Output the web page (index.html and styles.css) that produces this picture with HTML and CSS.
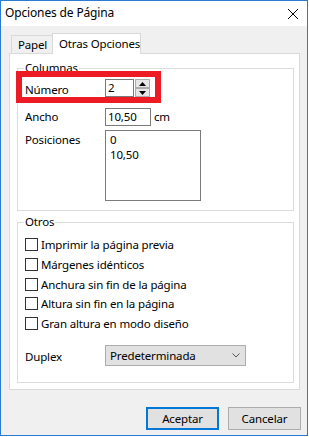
FILE: index.html
```html
<!DOCTYPE html>
<html lang="es">
<head>
<meta charset="utf-8">
<title>Opciones de Página</title>
<link rel="stylesheet" href="styles.css">
</head>
<body>
<div class="window">
  <div class="titlebar">
    <span class="title">Opciones de Página</span>
    <svg class="close" width="10" height="10" viewBox="0 0 10 10" aria-label="Cerrar">
      <path d="M0 0 L10 10 M10 0 L0 10" stroke="#000" stroke-width="1" fill="none"/>
    </svg>
  </div>
  <div class="content">
    <div class="tabs">
      <div class="tab">Papel</div>
      <div class="tab active">Otras Opciones</div>
    </div>
    <div class="panel">
      <fieldset class="group columnas">
        <legend>Columnas</legend>
        <div class="field numero">
          <span class="label">Número</span>
          <div class="spin">
            <div class="input spin-input">2</div>
            <div class="spin-btns">
              <div class="spin-btn"><svg width="7" height="4" viewBox="0 0 7 4"><path d="M0 4 L3.5 0 L7 4 Z" fill="#000"/></svg></div>
              <div class="spin-btn"><svg width="7" height="4" viewBox="0 0 7 4"><path d="M0 0 L3.5 4 L7 0 Z" fill="#000"/></svg></div>
            </div>
          </div>
          <div class="highlight"></div>
        </div>
        <div class="field ancho">
          <span class="label">Ancho</span>
          <div class="input ancho-input">10,50</div>
          <span class="unit">cm</span>
        </div>
        <div class="field posiciones">
          <span class="label">Posiciones</span>
          <div class="listbox">
            <div class="item">0</div>
            <div class="item">10,50</div>
          </div>
        </div>
      </fieldset>
      <fieldset class="group otros">
        <legend>Otros</legend>
        <div class="checks">
          <label class="check"><span class="box"></span><span>Imprimir la página previa</span></label>
          <label class="check"><span class="box"></span><span>Márgenes idénticos</span></label>
          <label class="check"><span class="box"></span><span>Anchura sin fin de la página</span></label>
          <label class="check"><span class="box"></span><span>Altura sin fin en la página</span></label>
          <label class="check"><span class="box"></span><span>Gran altura en modo diseño</span></label>
        </div>
        <div class="field duplex">
          <span class="label">Duplex</span>
          <div class="combo">
            <span>Predeterminada</span>
            <svg width="8" height="5" viewBox="0 0 8 5"><path d="M0.5 0.5 L4 4 L7.5 0.5" stroke="#555" stroke-width="1" fill="none"/></svg>
          </div>
        </div>
      </fieldset>
    </div>
    <div class="buttons">
      <div class="button default">Aceptar</div>
      <div class="button">Cancelar</div>
    </div>
  </div>
</div>
</body>
</html>
```

FILE: styles.css
```css
* {
  box-sizing: border-box;
}

body {
  margin: 0;
  background: #ffffff;
  font-family: "Noto Sans", "Open Sans", sans-serif;
  font-size: 11.5px;
  letter-spacing: -0.15px;
  color: #000000;
}

.window {
  width: 308px;
  height: 436px;
  border: 1px solid #2b7bd3;
  background: #f0f0f0;
  display: flex;
  flex-direction: column;
}

.titlebar {
  height: 25px;
  flex: none;
  background: #ffffff;
  display: flex;
  align-items: center;
  justify-content: space-between;
  padding: 0 9px 0 4px;
}

.title {
  font-size: 12px;
  line-height: 16px;
  margin-top: -2px;
}

.close {
  display: block;
}

.content {
  flex: 1;
  display: flex;
  flex-direction: column;
  padding: 7px 7px 0 8px;
}

.tabs {
  display: flex;
  align-items: flex-end;
  height: 20px;
  padding-left: 2px;
  position: relative;
  z-index: 1;
}

.tab {
  height: 18px;
  width: 42px;
  padding: 0 0 0 6px;
  border: 1px solid #d9d9d9;
  border-bottom: none;
  background: #f0f0f0;
  line-height: 17px;
  white-space: nowrap;
}

.tab.active {
  height: 21px;
  width: 89px;
  margin-left: -1px;
  background: #ffffff;
  margin-bottom: -1px;
  padding-top: 1px;
  line-height: 18px;
}

.panel {
  width: 291px;
  height: 337px;
  border: 1px solid #d9d9d9;
  background: #ffffff;
  padding: 6px 5px 0 7px;
  display: flex;
  flex-direction: column;
}

.group {
  margin: 0;
  border: 1px solid #dcdcdc;
  padding: 3px 7px 9px 7px;
  min-width: 0;
}

.group legend {
  padding: 0 1px;
  margin-left: -1px;
  line-height: 16px;
}

.field {
  display: flex;
  align-items: flex-start;
  position: relative;
}

.label {
  width: 80px;
  flex: none;
  line-height: 18px;
  padding-top: 2px;
}

.input {
  border: 1px solid #7a7a7a;
  background: #ffffff;
  height: 18px;
  line-height: 16px;
  padding-left: 2px;
}

.spin {
  display: flex;
}

.spin-input {
  width: 29px;
}

.spin-btns {
  display: flex;
  flex-direction: column;
  margin-left: 1px;
}

.spin-btn {
  width: 15px;
  height: 9px;
  border: 1px solid #acacac;
  background: #e6e6e6;
  display: flex;
  align-items: center;
  justify-content: center;
}

.spin-btn svg {
  display: block;
}

.highlight {
  position: absolute;
  left: -9px;
  top: -8px;
  width: 145px;
  height: 32px;
  border: 6px solid #ed1c24;
  pointer-events: none;
}

.ancho {
  margin-top: 9px;
}

.ancho .label,
.ancho .unit {
  padding-top: 0;
}

.ancho-input {
  width: 46px;
}

.unit {
  margin-left: 3px;
  line-height: 18px;
}

.posiciones {
  margin-top: 4px;
}

.posiciones .label {
  padding-top: 1px;
}

.listbox {
  width: 96px;
  height: 71px;
  border: 1px solid #7a7a7a;
  padding: 1px 0 0 4px;
}

.item {
  line-height: 15px;
}

.otros {
  margin-top: 3px;
  padding-top: 5px;
  padding-bottom: 16px;
}

.checks {
  display: flex;
  flex-direction: column;
}

.check {
  height: 19.7px;
  display: flex;
  align-items: center;
}

.box {
  width: 13px;
  height: 13px;
  border: 1px solid #333333;
  background: #ffffff;
  margin-right: 3px;
  flex: none;
}

.duplex {
  margin-top: 12px;
  align-items: center;
}

.combo {
  width: 141px;
  height: 21px;
  border: 1px solid #adadad;
  background: #e1e1e1;
  display: flex;
  align-items: center;
  justify-content: space-between;
  padding: 0 5px 0 4px;
}

.combo svg {
  display: block;
}

.buttons {
  display: flex;
  justify-content: flex-end;
  gap: 9px;
  margin-top: 17px;
  margin-right: -1px;
}

.button {
  width: 73px;
  height: 23px;
  border: 1px solid #adadad;
  background: #e1e1e1;
  text-align: center;
  line-height: 21px;
}

.button.default {
  border: 2px solid #0078d7;
  line-height: 19px;
}
```
